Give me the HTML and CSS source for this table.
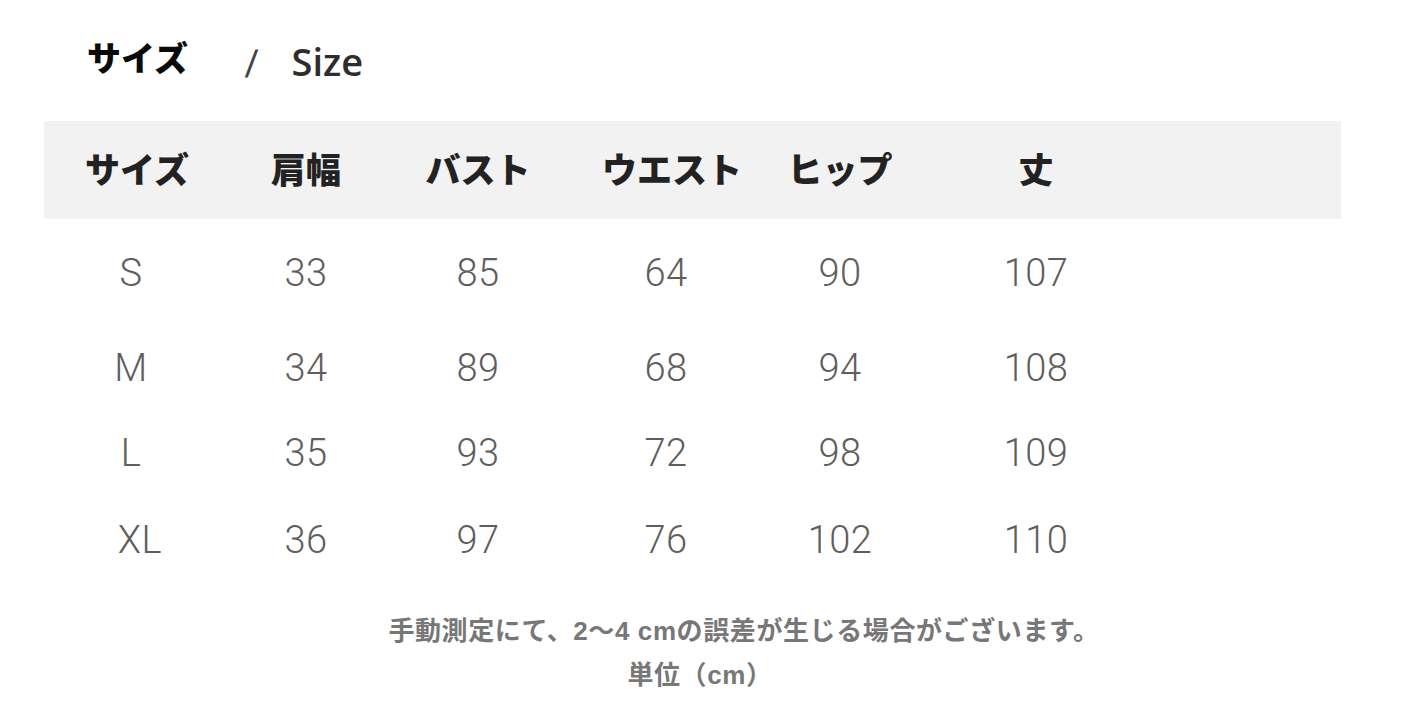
FILE: index.html
```html
<!DOCTYPE html>
<html lang="ja">
<head>
<meta charset="utf-8">
<link rel="stylesheet" href="styles.css">
</head>
<body>
<div class="page">
  <h1 class="title"><span class="title-ja">サイズ</span><span class="slash">/</span><span class="title-en">Size</span></h1>
  <div class="table">
    <div class="row head">
      <div>サイズ</div><div>肩幅</div><div>バスト</div><div>ウエスト</div><div>ヒップ</div><div>丈</div><div></div>
    </div>
    <div class="row data r1">
      <div class="sz">S</div><div>33</div><div>85</div><div class="c4">64</div><div>90</div><div>107</div><div></div>
    </div>
    <div class="row data r2">
      <div class="sz">M</div><div>34</div><div>89</div><div class="c4">68</div><div>94</div><div>108</div><div></div>
    </div>
    <div class="row data r3">
      <div class="sz">L</div><div>35</div><div>93</div><div class="c4">72</div><div>98</div><div>109</div><div></div>
    </div>
    <div class="row data r4">
      <div class="sz xl">XL</div><div>36</div><div>97</div><div class="c4">76</div><div>102</div><div>110</div><div></div>
    </div>
  </div>
  <div class="notes">
    <p class="note">手動測定にて、2〜4 cmの誤差が生じる場合がございます。</p>
    <p class="unit">単位（cm）</p>
  </div>
</div>
</body>
</html>
```
FILE: styles.css
```css
html, body {
  margin: 0;
  padding: 0;
  background: #ffffff;
}
body {
  width: 1406px;
  height: 708px;
  overflow: hidden;
  font-family: "Noto Sans CJK JP", "Noto Sans", sans-serif;
}
.page {
  padding: 32px 0 0 44px;
  width: 1297px;
}
.title {
  margin: 0 0 0 43px;
  height: 54px;
  display: flex;
  align-items: center;
  font-weight: 700;
  line-height: 1;
}
.title-ja {
  font-size: 34px;
  font-weight: 900;
  color: #0a0a0a;
  transform: translateY(-2px);
}
.slash {
  font-family: "Liberation Sans", sans-serif;
  font-weight: 400;
  font-size: 38px;
  color: #444;
  margin-left: 58px;
  margin-right: 35px;
  transform: translateY(5px) skewX(-6deg);
}
.title-en {
  font-family: "Open Sans", sans-serif;
  font-weight: 600;
  font-size: 38px;
  color: #2d2d2d;
  transform: translateY(2px);
}
.table {
  margin-top: 35px;
}
.row {
  display: grid;
  grid-template-columns: 186px 152px 192px 196px 140px 252px 1fr;
  align-items: center;
  text-align: center;
}
.head {
  background: #f2f2f2;
  height: 98px;
  font-weight: 900;
  font-size: 35px;
  color: #222;
}
.head > div {
  transform: translateY(-3px);
}
.data {
  font-family: "Roboto", "Liberation Sans", sans-serif;
  font-weight: 300;
  font-size: 38px;
  color: #5e5e5e;
  letter-spacing: 0.5px;
}
.data .sz {
  padding-right: 12px;
}
.data .sz.xl {
  padding-right: 0;
  padding-left: 6px;
}
.data .c4 {
  padding-right: 12px;
}
.r1 { height: 108px; }
.r2 { height: 82px; }
.r3 { height: 88px; }
.r4 { height: 86px; }
.notes {
  margin: 28px 0 0 -44px;
  width: 1406px;
  text-align: center;
  font-family: "Liberation Sans", "Noto Sans CJK JP", sans-serif;
  font-weight: 700;
  color: #777;
}
.note {
  margin: 0;
  padding-left: 82px;
  font-size: 26px;
  letter-spacing: 0.6px;
  line-height: 40px;
}
.unit {
  margin: 4px 0 0 0;
  padding-right: 6px;
  font-size: 26px;
  letter-spacing: 0.6px;
  line-height: 40px;
}
```
